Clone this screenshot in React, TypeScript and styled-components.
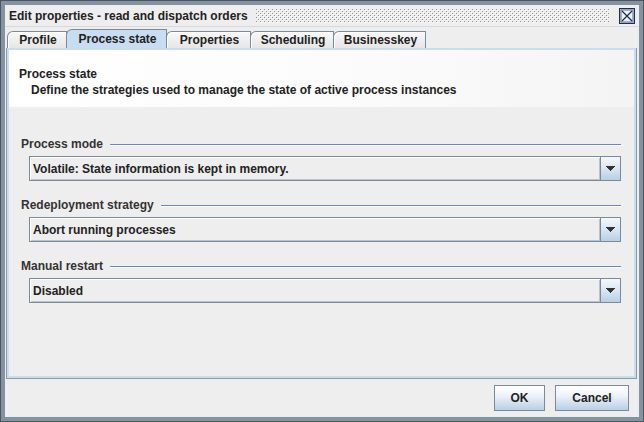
import React from 'react'
import styled, { createGlobalStyle } from 'styled-components'

const GlobalStyle = createGlobalStyle`
  html, body {
    margin: 0;
    padding: 0;
    background: #eeeeee;
  }
  body {
    font-family: "Liberation Sans", Arial, sans-serif;
    font-size: 12px;
    color: #333333;
  }
`

const Frame = styled.div`
  width: 644px;
  height: 422px;
  box-sizing: border-box;
  border: 1px solid #4c5560;
  box-shadow: inset 0 0 0 4px #8592a0;
  padding: 4px;
  display: flex;
  flex-direction: column;
  background: #eeeeee;
`

const TitleBar = styled.div`
  height: 22px;
  display: flex;
  align-items: center;
  padding: 1px 4px 0 4px;
  box-sizing: border-box;
  background: #eeeeee;
  border-bottom: 1px solid #d8d8d8;
`

const Title = styled.span`
  font-weight: bold;
  font-size: 12px;
  color: #222222;
  white-space: nowrap;
  margin-right: 8px;
`

const Bumps = styled.svg`
  flex: 1 1 0;
  min-width: 0;
  width: 0;
  height: 14px;
  margin-right: 10px;
`

const CloseBtn = styled.svg`
  width: 16px;
  height: 16px;
  flex: none;
`

const Body = styled.div`
  flex: 1;
  display: flex;
  flex-direction: column;
  padding: 2px 1px 0 1px;
`

const TabStrip = styled.div`
  display: flex;
  align-items: flex-end;
  height: 19px;
  padding-left: 1px;
`

const Tab = styled.div<{ $active?: boolean; $w: number }>`
  width: ${(p) => p.$w}px;
  height: ${(p) => (p.$active ? 19 : 17)}px;
  box-sizing: border-box;
  padding-left: 2px;
  display: flex;
  align-items: center;
  justify-content: center;
  font-weight: bold;
  color: #222222;
  white-space: nowrap;
  border: 1px solid #7a8a99;
  border-bottom: none;
  border-top-left-radius: 6px;
  margin-right: -1px;
  background: ${(p) => (p.$active ? '#c8ddf2' : 'linear-gradient(#f8f8f8, #e6e6e6)')};
  box-shadow: ${(p) => (p.$active ? 'none' : 'inset 1px 1px 0 #ffffff')};
  position: relative;
  z-index: ${(p) => (p.$active ? 1 : 0)};
`

const TabPanel = styled.div`
  flex: 1;
  display: flex;
  flex-direction: column;
  border: 1px solid #8a9aab;
  border-top: none;
  box-shadow: inset 0 0 0 2px #c8ddf2;
  padding: 2px;
  margin-right: 1px;
`

const Header = styled.div`
  height: 57px;
  box-sizing: border-box;
  padding: 16px 10px 0;
  background: linear-gradient(90deg, #ffffff 0%, #fbfbfb 60%, #f4f4f4 100%);
`

const HeaderTitle = styled.div`
  font-size: 12px;
  font-weight: bold;
  color: #222222;
  line-height: 16px;
`

const HeaderText = styled.div`
  font-size: 12px;
  font-weight: bold;
  color: #222222;
  line-height: 16px;
  padding-left: 12px;
`

const Content = styled.div`
  flex: 1;
  display: flex;
  flex-direction: column;
  gap: 17px;
  padding: 30px 13px 0 12px;
`

const Group = styled.div`
  display: flex;
  flex-direction: column;
  gap: 5px;
`

const GroupTitle = styled.div`
  display: flex;
  align-items: center;
  gap: 7px;
  height: 14px;
  font-weight: bold;
  color: #333333;
  &::after {
    content: '';
    flex: 1;
    height: 1px;
    background: #6a85c0;
    box-shadow: 0 1px 0 #ffffff;
  }
`

const Combo = styled.div`
  margin-left: 8px;
  height: 25px;
  box-sizing: border-box;
  display: flex;
  border: 1px solid #7a8a99;
  background: #eeeeee;
`

const ComboValue = styled.div`
  flex: 1;
  display: flex;
  align-items: center;
  padding-left: 3px;
  font-weight: bold;
  color: #222222;
  box-shadow: inset 1px 1px 0 #ffffff, inset -1px -1px 0 #b8c4d0;
`

const ArrowButton = styled.div`
  width: 19px;
  display: flex;
  align-items: center;
  justify-content: center;
  border-left: 1px solid #7a8a99;
  background: linear-gradient(#f4f8fc 0%, #dde8f3 45%, #b8cfe5 100%);
`

const ButtonRow = styled.div`
  height: 38px;
  display: flex;
  align-items: center;
  justify-content: flex-end;
  gap: 10px;
  padding-right: 9px;
`

const Button = styled.button<{ $w: number }>`
  width: ${(p) => p.$w}px;
  height: 26px;
  font-family: "Liberation Sans", Arial, sans-serif;
  font-size: 12px;
  font-weight: bold;
  color: #222222;
  border: 1px solid #7a8a99;
  background: linear-gradient(#ffffff 0%, #eef3f9 40%, #b8cfe5 100%);
  padding: 0;
`

const Arrow = () => (
  <svg width="9" height="5" viewBox="0 0 9 5">
    <path d="M0 0h9v1h-1v1h-1v1h-1v1h-1v1h-1v-1h-1v-1h-1v-1h-1v-1h-1z" fill="#333333" />
  </svg>
)

const groups = [
  { label: 'Process mode', value: 'Volatile: State information is kept in memory.' },
  { label: 'Redeployment strategy', value: 'Abort running processes' },
  { label: 'Manual restart', value: 'Disabled' },
]

const tabs = [
  { label: 'Profile', w: 60 },
  { label: 'Process state', w: 101 },
  { label: 'Properties', w: 85 },
  { label: 'Scheduling', w: 84 },
  { label: 'Businesskey', w: 93 },
]

export default function App() {
  return (
    <>
      <GlobalStyle />
      <Frame>
        <TitleBar>
          <Title>Edit properties - read and dispatch orders</Title>
          <Bumps>
            <defs>
              <pattern id="bumps" width="4" height="4" patternUnits="userSpaceOnUse">
                <rect x="0" y="0" width="1" height="1" fill="#8f8f8f" />
                <rect x="2" y="2" width="1" height="1" fill="#8f8f8f" />
                <rect x="1" y="1" width="1" height="1" fill="#ffffff" />
                <rect x="3" y="3" width="1" height="1" fill="#ffffff" />
              </pattern>
            </defs>
            <rect width="100%" height="100%" fill="url(#bumps)" />
          </Bumps>
          <CloseBtn viewBox="0 0 16 16">
            <rect x="0.5" y="0.5" width="15" height="15" fill="#c8d6e8" stroke="#1e2d4a" />
            <rect x="2" y="2" width="12" height="12" fill="#eef3f9" stroke="#5a6f94" strokeWidth="1" />
            <path d="M3 3L13 13M13 3L3 13" stroke="#1e2d4a" strokeWidth="1.3" />
          </CloseBtn>
        </TitleBar>
        <Body>
          <TabStrip>
            {tabs.map((t) => (
              <Tab key={t.label} $w={t.w} $active={t.label === 'Process state'}>
                {t.label}
              </Tab>
            ))}
          </TabStrip>
          <TabPanel>
            <Header>
              <HeaderTitle>Process state</HeaderTitle>
              <HeaderText>Define the strategies used to manage the state of active process instances</HeaderText>
            </Header>
            <Content>
              {groups.map((g) => (
                <Group key={g.label}>
                  <GroupTitle>{g.label}</GroupTitle>
                  <Combo>
                    <ComboValue>{g.value}</ComboValue>
                    <ArrowButton>
                      <Arrow />
                    </ArrowButton>
                  </Combo>
                </Group>
              ))}
            </Content>
          </TabPanel>
          <ButtonRow>
            <Button $w={51}>OK</Button>
            <Button $w={74}>Cancel</Button>
          </ButtonRow>
        </Body>
      </Frame>
    </>
  )
}
